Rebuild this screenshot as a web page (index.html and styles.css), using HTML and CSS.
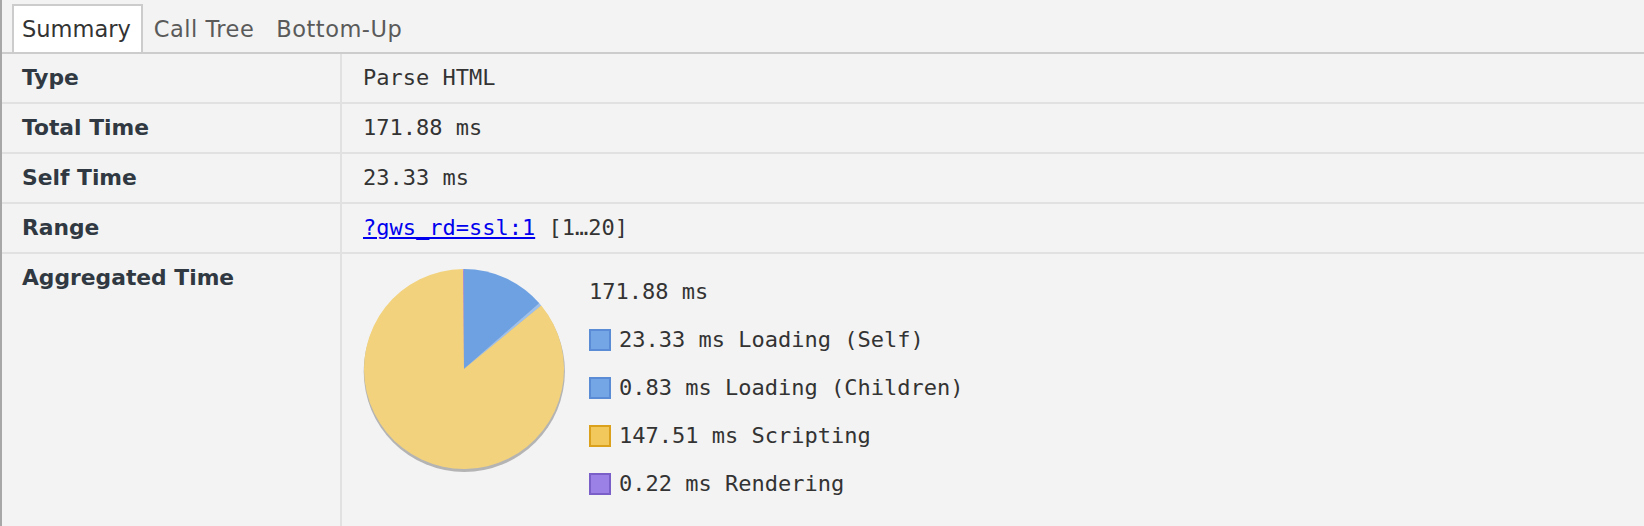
FILE: index.html
```html
<!DOCTYPE html>
<html>
<head>
<meta charset="utf-8">
<link rel="stylesheet" href="styles.css">
</head>
<body>
<div class="panel">
  <div class="tabs">
    <div class="tab selected">Summary</div>
    <div class="tab">Call Tree</div>
    <div class="tab">Bottom-Up</div>
  </div>
  <div class="details">
    <div class="row">
      <div class="label">Type</div>
      <div class="value">Parse HTML</div>
    </div>
    <div class="row">
      <div class="label">Total Time</div>
      <div class="value">171.88 ms</div>
    </div>
    <div class="row">
      <div class="label">Self Time</div>
      <div class="value">23.33 ms</div>
    </div>
    <div class="row">
      <div class="label">Range</div>
      <div class="value"><a class="link" href="#">?gws_rd=ssl:1</a> [1…20]</div>
    </div>
    <div class="row last">
      <div class="label">Aggregated Time</div>
      <div class="value agg">
        <svg class="pie" width="210" height="210" viewBox="0 0 210 210">
          <circle cx="102.3" cy="103.4" r="100.6" fill="#b4b4b4"/>
          <path d="M102 101 L102 1 A100 100 0 0 1 177.31 35.21 Z" fill="#6ea1e2"/>
          <path d="M102 101 L177.31 35.21 A100 100 0 0 1 179.25 37.50 Z" fill="#9cc0ee"/>
          <path d="M102 101 L179.25 37.50 A100 100 0 1 1 101.20 1.00 Z" fill="#f2d27c"/>
          <path d="M102 101 L101.20 1.00 A100 100 0 0 1 102 1 Z" fill="#9b80e6"/>
        </svg>
        <div class="legend">
          <div class="legend-row total">171.88 ms</div>
          <div class="legend-row"><span class="swatch loading"></span>23.33 ms Loading (Self)</div>
          <div class="legend-row"><span class="swatch loading"></span>0.83 ms Loading (Children)</div>
          <div class="legend-row"><span class="swatch scripting"></span>147.51 ms Scripting</div>
          <div class="legend-row"><span class="swatch rendering"></span>0.22 ms Rendering</div>
        </div>
      </div>
    </div>
  </div>
</div>
</body>
</html>
```
FILE: styles.css
```css
html, body {
  margin: 0;
  padding: 0;
  background: #f3f3f3;
}

.panel {
  height: 526px;
  border-left: 2px solid #a7a7a7;
  background: #f3f3f3;
  display: flex;
  flex-direction: column;
  overflow: hidden;
}

.tabs {
  display: flex;
  align-items: flex-end;
  padding-left: 10px;
  border-bottom: 2px solid #cccccc;
  box-sizing: border-box;
  height: 54px;
}

.tab {
  font-family: "DejaVu Sans", "Liberation Sans", sans-serif;
  font-size: 22.5px;
  letter-spacing: 0.5px;
  color: #5a5a5a;
  height: 48px;
  line-height: 46px;
  padding: 0 10px 0 8px;
  border: 2px solid transparent;
  border-bottom: none;
  box-sizing: border-box;
}

.tab.selected {
  background: #ffffff;
  border-color: #cccccc;
  color: #333333;
  letter-spacing: 0;
  margin-right: 1px;
}

.details {
  flex: 1;
  display: flex;
  flex-direction: column;
}

.row {
  display: flex;
  border-bottom: 2px solid #e1e1e1;
}

.row.last {
  flex: 1;
  border-bottom: none;
}

.label {
  width: 340px;
  flex: none;
  box-sizing: border-box;
  padding-left: 20px;
  border-right: 2px solid #e1e1e1;
  font-family: "DejaVu Sans", "Liberation Sans", sans-serif;
  font-weight: bold;
  font-size: 21.8px;
  line-height: 48px;
  color: #303942;
}

.value {
  padding-left: 21px;
  font-family: "DejaVu Sans Mono", "Liberation Mono", monospace;
  font-size: 22px;
  line-height: 48px;
  color: #333333;
  white-space: pre;
}

.link {
  color: #0000ee;
  text-decoration: underline;
}

.value.agg {
  display: flex;
  align-items: flex-start;
  padding-left: 20px;
}

.pie {
  margin-top: 14px;
  flex: none;
}

.legend {
  margin-left: 17px;
  padding-top: 14px;
  display: flex;
  flex-direction: column;
}

.legend-row {
  display: flex;
  align-items: center;
  height: 48px;
  line-height: 48px;
}

.swatch {
  width: 22px;
  height: 22px;
  box-sizing: border-box;
  border: 2px solid;
  margin-right: 8px;
  flex: none;
}

.swatch.loading {
  background: #74a5e4;
  border-color: #5a8bd5;
}

.swatch.scripting {
  background: #f2c85c;
  border-color: #dca11c;
}

.swatch.rendering {
  background: #9b80e6;
  border-color: #7b5fc9;
}
```
